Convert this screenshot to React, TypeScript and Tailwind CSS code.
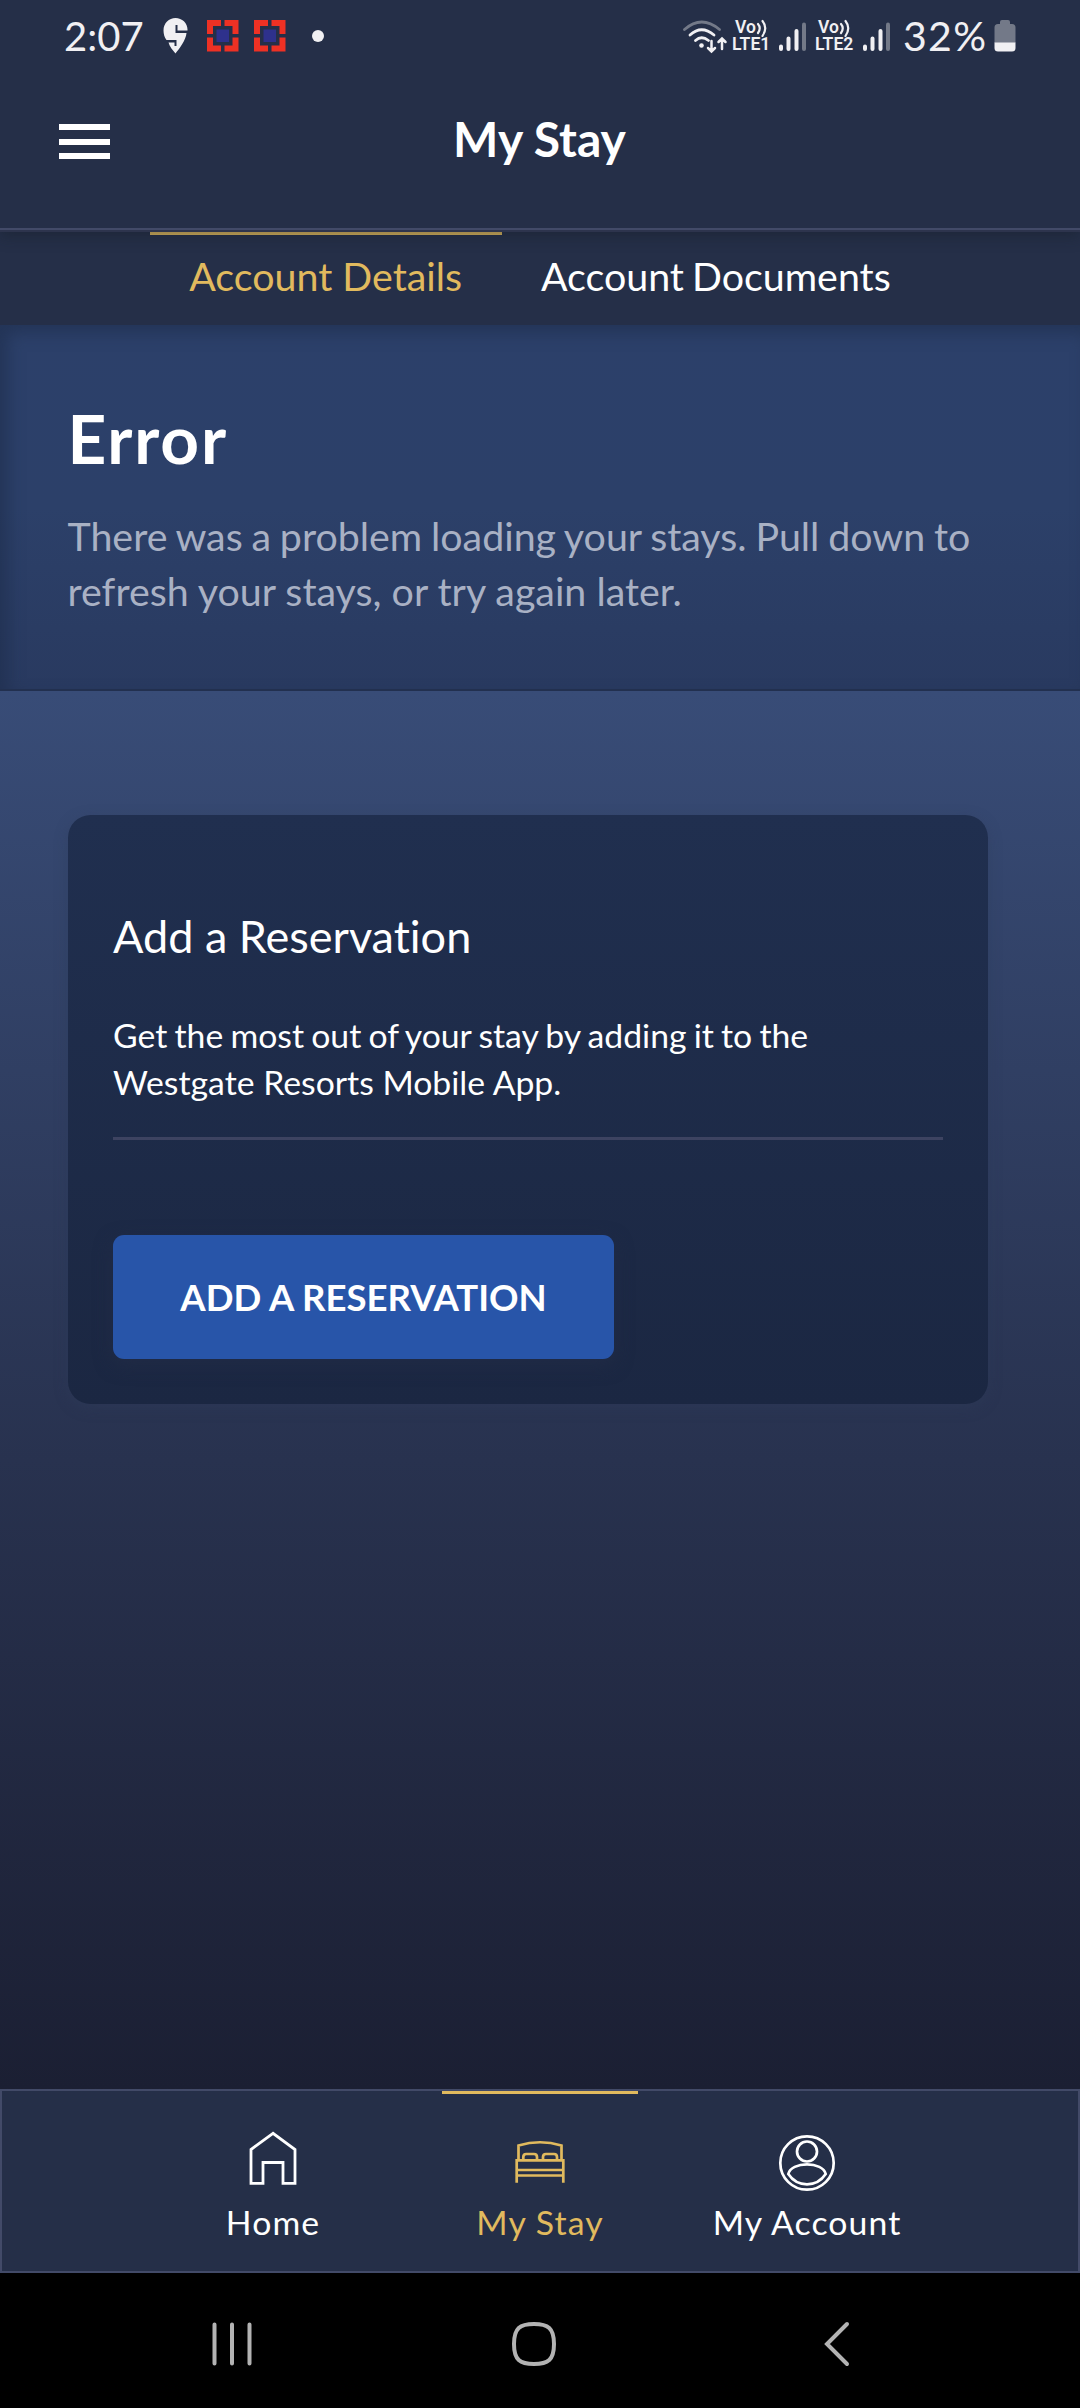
import React from "react";

function AppBadge() {
  return (
    <svg width="32" height="32" viewBox="0 0 32 32">
      <path fill="#ee3124" d="M0 0H14V6H6V14H0ZM17.5 0H31.5V14H25.5V6H17.5ZM0 17.5H6V25.5H14V31.5H0ZM25.5 17.5H31.5V31.5H17.5V25.5H25.5Z" />
      <rect x="9.5" y="9.5" width="12.5" height="12.5" fill="#2e318c" />
    </svg>
  );
}

function Signal() {
  return (
    <svg width="28" height="32" viewBox="0 0 28 32" strokeWidth="4" strokeLinecap="round" stroke="#f1f0f3">
      <path d="M3 26.5V29M10.5 18.5V29M18.5 11V29" />
      <path d="M26 4.500V29" stroke="#737988" />
    </svg>
  );
}

function VoLte({ n }: { n: string }) {
  return (
    <div className="flex h-[34px] w-[40px] flex-col font-['Roboto'] text-[17.5px] leading-[17px] font-semibold text-[#f1f0f3]">
      <div className="flex h-[17px] pl-[3px]">
        <span>Vo</span>
        <svg width="12" height="18" viewBox="0 0 12 18" fill="none" stroke="#f1f0f3" strokeWidth="2.200" strokeLinecap="round">
          <path d="M2 5Q5.500 9 2 14M6.500 2Q12 9 6.500 17" />
        </svg>
      </div>
      <span className="whitespace-nowrap tracking-[0.1px]">LTE{n}</span>
    </div>
  );
}

function StatusBar() {
  return (
    <div className="relative z-20 flex h-[72px] shrink-0 items-center bg-[#252f48] pl-[64px] text-[40px] text-[#f1f0f3]">
      <span className="w-[99px]">2:07</span>
      <svg width="25" height="36" viewBox="0 0 25 36">
        <path fill="#f1f0f3" d="M12.500 0C19 0 24.500 5 24.500 11.500V12.500H14.500V7H12.500V15H23.500C23 22 16 31 12.500 35.500C10 32.500 6.500 28.500 5.500 24.500H11.500V28H13.500V22H3.500C1.500 19.500.500 16 .500 12.500C.500 5 6 0 12.500 0Z" />
      </svg>
      <div className="ml-[19px] flex gap-[15px]"><AppBadge /><AppBadge /></div>
      <div className="ml-[26px] size-3 rounded-full bg-[#f1f0f3]" />
      <svg className="ml-[358px] -mr-px" width="46" height="36" viewBox="0 0 46 36" fill="none" stroke="#f1f0f3" strokeWidth="2.800" strokeLinecap="round">
        <path d="M2.500 11.500Q19.500-3.500 37.500 11.500" stroke="#737988" />
        <path d="M8 17Q19.500 6.500 32 17M13.500 22.500Q19.500 17 26.500 22.500" />
        <circle cx="19.500" cy="27.500" r="2.300" fill="#f1f0f3" stroke="none" />
        <path d="M29.500 23V33M26 30L29.500 33.500L33 30M40 31V21M36.500 24L40 20.500L43.500 24" strokeWidth="2.500" />
      </svg>
      <div className="ml-[5px]"><VoLte n="1" /></div>
      <div className="ml-[6px]"><Signal /></div>
      <div className="ml-[9px]"><VoLte n="2" /></div>
      <div className="ml-[7px]"><Signal /></div>
      <span className="ml-[13px] w-[91px] text-[41px] tracking-[1.3px]">32%</span>
      <svg className="shrink-0" width="22" height="32" viewBox="0 0 22 32">
        <path fill="#737988" d="M6 2Q6 0 8 0H14Q16 0 16 2V4H18Q21.500 4 21.500 7.500V23H.500V7.500Q.500 4 4 4H6Z" />
        <path fill="#f1f0f3" d="M.500 22.500H21.500V28Q21.500 31.500 18 31.500H4Q.500 31.500.500 28Z" />
      </svg>
    </div>
  );
}

function Header() {
  return (
    <header className="relative z-10 flex h-[160px] shrink-0 border-b-2 border-[#2d344d] bg-[#252f48] shadow-[0_4px_14px_rgba(20,28,38,0.45)]">
      <div className="flex h-[158px] w-full border-b-2 border-[#424a68]">
        <div className="mt-[52px] ml-[59px] flex h-[35px] w-[51px] flex-col justify-between">
          <i className="h-[6px] bg-white" />
          <i className="h-[6px] bg-white" />
          <i className="h-[6px] bg-white" />
        </div>
        <h1 className="mt-[36px] mr-[111px] flex-1 text-center text-[48px] leading-[62px] font-bold">My Stay</h1>
      </div>
    </header>
  );
}

function HomeIcon() {
  return (
    <svg width="60" height="60" viewBox="243 2130 60 60" fill="none" stroke="currentColor" strokeWidth="2.800">
      <path d="M273 2133.300L251 2149.500V2183.300H263V2162.500H283V2183.300H295V2149.500Z" />
    </svg>
  );
}

function BedIcon() {
  return (
    <svg width="60" height="60" viewBox="510 2130 60 60" fill="none" stroke="currentColor" strokeWidth="2.700">
      <path d="M518.500 2160V2145.500Q540 2139 561.500 2145.500V2160M516.700 2182.700V2160.300H563.300V2182.700M516.700 2170H563.300M516.700 2175.500H563.300" />
      <path d="M523.300 2160V2157Q523.300 2154 526.300 2154H534Q537 2154 537 2157V2160M543 2160V2157Q543 2154 546 2154H554Q557 2154 557 2157V2160" />
    </svg>
  );
}

function AccountIcon() {
  return (
    <svg className="overflow-visible" width="60" height="60" viewBox="777 2130 60 60" fill="none" stroke="currentColor" strokeWidth="2.700">
      <circle cx="807" cy="2163" r="26.700" />
      <circle cx="807" cy="2151.500" r="10" />
      <path d="M788.300 2174C789.500 2168 798 2164.300 807 2164.300S824.500 2168 825.700 2174C821 2181 814 2184.300 807 2184.300S793 2181 788.300 2174Z" />
    </svg>
  );
}

function NavItem({ label, active, children }: { label: string; active?: boolean; children: React.ReactNode }) {
  return (
    <div className={active ? "relative flex w-[267px] flex-col items-center pt-[39px] text-[#e1ba5e]" : "flex w-[267px] flex-col items-center pt-[39px]"}>
      {active && <div className="absolute top-0 left-[35.5px] h-[3px] w-[196px] bg-[#e1ba5e]" />}
      {children}
      <span className="mt-[12px] text-[33.75px] leading-[40px] tracking-[1.1px]">{label}</span>
    </div>
  );
}

export default function App() {
  return (
    <div className="flex h-[2408px] w-[1080px] flex-col overflow-hidden bg-[#252f48] font-['Lato',sans-serif] text-white [font-variant-ligatures:none]">
      <StatusBar />
      <Header />
      <nav className="flex h-[93px] shrink-0 justify-center bg-[#252f48] text-[39.375px] leading-[48px]">
        <div className="border-t-[3px] border-[#e1ba5e] px-[39.4px] pt-[17px] text-[#e1ba5e]">Account Details</div>
        <div className="px-[39.4px] pt-[20px] [word-spacing:-2px]">Account Documents</div>
      </nav>
      <section className="h-[366px] shrink-0 border-b-2 border-[#22304f] bg-linear-to-b from-[#2c406a] via-[#2c4069] to-[#293a60] px-[67.5px] pt-[72px] shadow-[inset_8px_8px_16px_rgba(30,45,75,0.6)]">
        <h2 className="text-[67.5px] leading-[81px] font-bold tracking-[1.8px]">Error</h2>
        <p className="mt-[30px] text-[39.375px] leading-[55px] whitespace-nowrap text-[#a9b1c4]">
          <span className="[word-spacing:-1.3px]">There was a problem loading your stays. Pull down to</span><br />refresh your stays, or try again later.
        </p>
      </section>
      <main className="h-[1398px] shrink-0 bg-linear-to-b from-[#384c77] via-[#28324f] via-55% to-[#1b1f33] pt-[124px] pl-[68px]">
        <section className="h-[589px] w-[920px] rounded-[22.5px] bg-linear-to-b from-[#202f4f] to-[#1b2742] px-[45px] pt-[94px] shadow-[0_4px_14px_rgba(48,60,90,0.4)]">
          <h3 className="text-[45px] leading-[54px]">Add a Reservation</h3>
          <p className="mt-[49px] text-[33.75px] leading-[47px] whitespace-nowrap">
            <span className="[word-spacing:-1.45px]">Get the most out of your stay by adding it to the</span><br />Westgate Resorts Mobile App.
          </p>
          <div className="mt-[31px] h-[3px] w-[830px] bg-[#3d4361]" />
          <button className="mt-[95px] block h-[124px] w-[501px] rounded-[11px] bg-[#2855a9] text-[36.56px] leading-[44px] font-bold shadow-[0_6px_18px_rgba(34,44,70,0.8)]">ADD A RESERVATION</button>
        </section>
      </main>
      <nav className="flex h-[184px] shrink-0 justify-center border-2 border-[#424a68] bg-[#252f48]">
        <NavItem label="Home"><HomeIcon /></NavItem>
        <NavItem label="My Stay" active><BedIcon /></NavItem>
        <NavItem label="My Account"><AccountIcon /></NavItem>
      </nav>
      <footer className="flex h-[135px] shrink-0 items-start justify-between bg-black pt-[47px] pr-[229px] pl-[211px]">
        <svg width="42" height="48" viewBox="0 0 42 48" stroke="#b3b3b3" strokeWidth="4" strokeLinecap="round"><path d="M3.500 4.500V43.500M21 4.500V43.500M38.500 4.500V43.500" /></svg>
        <svg className="-ml-[8px]" width="48" height="48" viewBox="0 0 48 48" fill="none" stroke="#b3b3b3" strokeWidth="4"><path d="M24 4C38 4 44 8 44 24S38 44 24 44S4 40 4 24S10 4 24 4Z" /></svg>
        <svg width="28" height="48" viewBox="0 0 28 48" fill="none" stroke="#b3b3b3" strokeWidth="4" strokeLinecap="round"><path d="M24 4L4 24L24 44" /></svg>
      </footer>
    </div>
  );
}
